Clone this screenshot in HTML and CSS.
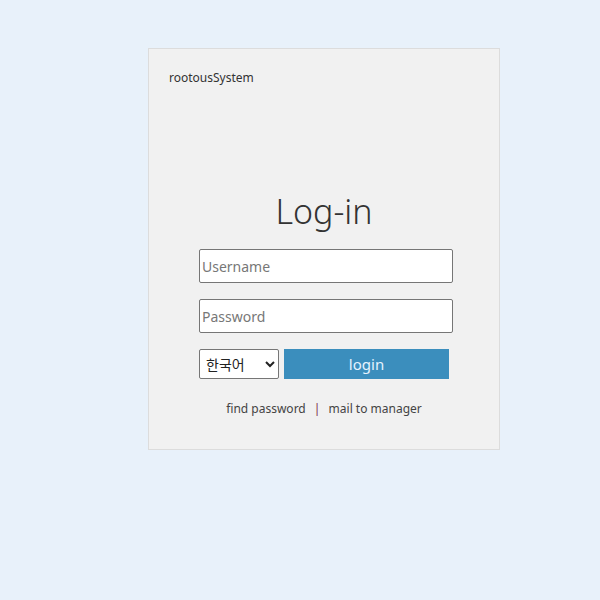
FILE: index.html
```html
<!DOCTYPE html>
<html>
  <head>
    <meta charset="utf-8">
    <title>rootousSystem - Log-in</title>
    <link rel="stylesheet" href="styles.css">
  </head>
  <body>
    <div class="card">
      <div class="brand">rootousSystem</div>
      <h1 class="title">Log-in</h1>
      <form class="form">
        <input class="field" type="text" placeholder="Username">
        <input class="field" type="password" placeholder="Password">
        <div class="row">
          <select class="lang">
            <option>한국어</option>
            <option>English</option>
          </select>
          <button class="btn" type="button">login</button>
        </div>
      </form>
      <div class="links">
        <a href="#">find password</a>
        <span class="sep">|</span>
        <a href="#">mail to manager</a>
      </div>
    </div>
  </body>
</html>
```

FILE: styles.css
```css
body{margin:0;padding:48px 0 0 148px;background:#e8f1fa;font-family:"Noto Sans","Noto Sans CJK KR",sans-serif;color:#333}
.card{box-sizing:border-box;width:352px;height:402px;border:1px solid #dcdcdc;background:#f1f1f1;display:flex;flex-direction:column}
.brand{margin:20px 0 0 20px;font-size:12px;line-height:18px;color:#333}
.title{margin:102px 0 0;text-align:center;font-size:34px;font-weight:300;line-height:44px;color:#333}
.form{display:flex;flex-direction:column;gap:16px;margin:16px 0 0 50px}
.field{box-sizing:border-box;width:254px;height:34px;margin:0;padding:0 2px;border:1px solid #767676;border-radius:2px;background:#fff;font:14px "Noto Sans",sans-serif;color:#333}
.field::placeholder{color:#777}
.row{display:flex;gap:5px}
.lang{box-sizing:border-box;width:80px;height:30px;margin:0;border:1px solid #767676;border-radius:2px;background:#fff;font:14px "Noto Sans CJK KR",sans-serif;color:#222;padding:0 2px}
.btn{width:165px;height:30px;margin:0;border:0;background:#3b8ebd;color:#e6f3ff;font:15px "Noto Sans",sans-serif;padding:0}
.links{margin:20px 0 0;text-align:center;font-size:12px;line-height:20px}
.links a{color:#444;text-decoration:none}
.sep{color:#7a2c4c;margin:0 5px}
```
